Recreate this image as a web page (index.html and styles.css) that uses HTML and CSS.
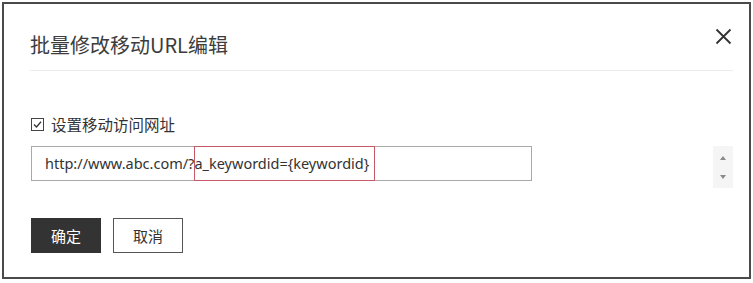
FILE: index.html
```html
<!DOCTYPE html>
<html lang="zh-CN">
<head>
    <meta charset="UTF-8">
    <title>批量修改移动URL编辑</title>
    <link rel="stylesheet" href="styles.css">
</head>
<body>

    <div class="dialog">
        <!-- En-tête -->
        <div class="dialog-header">
            <h2 class="dialog-title">批量修改移动URL编辑</h2>
            <span class="close">
                <svg width="17" height="17" viewBox="0 0 17 17">
                    <path d="M1.5 1.5 L15.5 15.5 M15.5 1.5 L1.5 15.5" stroke="#333" stroke-width="1.8" fill="none"/>
                </svg>
            </span>
        </div>

        <div class="dialog-body">
            <label class="check-row">
                <svg class="checkbox" width="13" height="13" viewBox="0 0 13 13">
                    <rect x="0.5" y="0.5" width="12" height="12" fill="#fff" stroke="#444"/>
                    <path d="M3 6.5 L5.5 9 L10 3.8" stroke="#333" stroke-width="1.3" fill="none"/>
                </svg>
                设置移动访问网址
            </label>

            <div class="field-row">
                <div class="url-field">
                    <span class="url-text">http://www.abc.com/?a_keywordid={keywordid}</span>
                    <span class="highlight"></span>
                </div>
                <div class="spinner">
                    <span class="arrow-up"></span>
                    <span class="arrow-down"></span>
                </div>
            </div>

            <div class="actions">
                <button class="btn btn-primary">确定</button>
                <button class="btn">取消</button>
            </div>
        </div>
    </div>

</body>
</html>
```

FILE: styles.css
```css
body {
    margin: 0;
    font-family: "Noto Sans", "Noto Sans CJK SC", sans-serif;
    color: #333;
    background: #fff;
}

.dialog {
    box-sizing: border-box;
    margin: 2px;
    width: 749px;
    height: 277px;
    border: 2px solid #4a4a4a;
    background: #fff;
}

.dialog-header {
    display: flex;
    justify-content: space-between;
    align-items: flex-start;
    margin: 0 16px 0 26px;
    padding: 27px 0 11px 0;
    border-bottom: 1px solid #ececec;
}

.dialog-title {
    margin: 0;
    font-family: "Noto Sans CJK SC", sans-serif;
    font-weight: normal;
    font-size: 20px;
    line-height: 28px;
    color: #3c3c3c;
}

.close {
    display: block;
    width: 17px;
    height: 17px;
    margin-top: -3px;
    margin-right: 1px;
}

.close svg {
    display: block;
}

.dialog-body {
    padding: 0 16px 0 27px;
}

.check-row {
    display: flex;
    align-items: center;
    gap: 7px;
    margin-top: 43px;
    font-family: "Noto Sans CJK SC", sans-serif;
    font-size: 15.5px;
    line-height: 20px;
    color: #333;
}

.checkbox {
    display: block;
}

.field-row {
    display: flex;
    justify-content: space-between;
    align-items: flex-start;
    margin-top: 12px;
}

.url-field {
    position: relative;
    box-sizing: border-box;
    width: 501px;
    height: 35px;
    border: 1px solid #a9a9a9;
    padding-left: 13px;
    font-size: 14.5px;
    line-height: 33px;
    color: #333;
    white-space: nowrap;
}

.highlight {
    position: absolute;
    left: 162px;
    top: -1px;
    width: 181px;
    height: 35px;
    box-sizing: border-box;
    border: 1.5px solid #c55a66;
}

.spinner {
    display: flex;
    flex-direction: column;
    justify-content: space-between;
    align-items: center;
    box-sizing: border-box;
    width: 20px;
    height: 42px;
    padding: 10px 0 9px 0;
    background: #f5f5f5;
}

.arrow-up,
.arrow-down {
    width: 0;
    height: 0;
    border-left: 3.5px solid transparent;
    border-right: 3.5px solid transparent;
}

.arrow-up {
    border-bottom: 4px solid #8a8a8a;
}

.arrow-down {
    border-top: 4px solid #8a8a8a;
}

.actions {
    display: flex;
    gap: 12px;
    margin-top: 30px;
}

.btn {
    box-sizing: border-box;
    width: 70px;
    height: 35px;
    border: 1px solid #555;
    background: #fff;
    color: #333;
    font-family: "Noto Sans CJK SC", sans-serif;
    font-size: 15px;
    padding: 0;
    cursor: pointer;
}

.btn-primary {
    background: #333;
    border-color: #333;
    color: #fff;
}
```
